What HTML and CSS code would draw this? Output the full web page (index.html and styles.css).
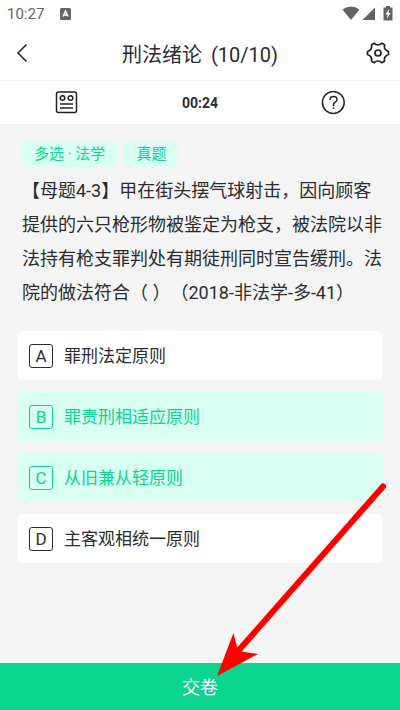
FILE: index.html
```html
<!DOCTYPE html>
<html lang="zh-CN">
<head>
<meta charset="utf-8">
<meta name="viewport" content="width=device-width, initial-scale=1">
<title>刑法绪论</title>
<link rel="stylesheet" href="styles.css">
</head>
<body>
<div class="page">
  <div class="status">
    <span class="clock">10:27</span>
    <svg class="badge" width="11" height="12" viewBox="0 0 11 12" aria-hidden="true"><rect width="11" height="12" rx="1.5" fill="#636363"/><path d="M3 8.5 5.500 3 8 8.500M4 7h3" fill="none" stroke="#fff" stroke-width="1.500"/></svg>
    <svg class="signals" width="51" height="16" viewBox="0 0 51 16" aria-hidden="true">
      <path d="M0.500 3.500Q9-2.500 17.500 3.500L9 14Z" fill="#636363"/>
      <path d="M20.500 14 33 1.500V14Z" fill="#636363"/>
      <path d="M44 0h4v1.500h2.500V14.500H41.500V1.500H44Z" fill="#636363"/>
      <path d="M47 3 43.500 8.500H45.500L45 12.500 48.500 7H46.500Z" fill="#fff"/>
    </svg>
  </div>
  <header class="header">
    <button class="icon-btn" type="button" aria-label="返回">
      <svg width="24" height="24" viewBox="0 0 24 24"><path d="M16.500 3.500 8 12 16.500 20.500" fill="none" stroke="#222" stroke-width="1.500"/></svg>
    </button>
    <h1 class="title">刑法绪论 <span class="count">(10/10)</span></h1>
    <button class="icon-btn" type="button" aria-label="设置">
      <svg width="24" height="24" viewBox="0 0 24 24" fill="none" stroke="#222" stroke-width="1.700" stroke-linejoin="round"><path d="M8.300 2.200Q9.700 4 12 4T15.700 2.200L18.500 3.800Q18 6.500 19 8T22.500 10.500V13.500Q20 14.300 19 16T18.500 20.200L15.700 21.800Q14.300 20 12 20T8.300 21.800L5.500 20.200Q6 17.500 5 16T1.500 13.500V10.500Q4 9.700 5 8T5.500 3.800Z"/><circle cx="12" cy="12" r="3"/></svg>
    </button>
  </header>
  <nav class="tools">
    <button class="icon-btn" type="button" aria-label="答题卡">
      <svg width="24" height="24" viewBox="0 0 24 24" fill="none" stroke="#222" stroke-width="1.500"><rect x="1.500" y="1" width="20" height="20.500" rx="2"/><circle cx="7.500" cy="7" r="2.300"/><circle cx="15.500" cy="7" r="2.300"/><path d="M5 13h13M5 17h13"/></svg>
    </button>
    <span class="timer">00:24</span>
    <button class="icon-btn" type="button" aria-label="帮助">
      <svg width="24" height="24" viewBox="0 0 24 24" fill="none" stroke="#222" stroke-width="1.500"><circle cx="12.300" cy="11.500" r="10.900"/><path d="M9 9C9 6.500 10.500 5.500 12.500 5.500S16 6.700 16 8.700C16 11 12.500 11.200 12.500 13.500V15M12.500 16.500v1.600"/></svg>
    </button>
  </nav>
  <main class="content">
    <div class="tags"><span class="tag">多选 · 法学</span><span class="tag">真题</span></div>
    <p class="question" id="question">【母题4-3】甲在街头摆气球射击，因向顾客提供的六只枪形物被鉴定为枪支，被法院以非法持有枪支罪判处有期徒刑同时宣告缓刑。法院的做法符合（ ）（2018-非法学-多-41）</p>
    <div class="options" role="group" aria-labelledby="question">
      <label class="option"><input class="check" type="checkbox"><span class="letter">A</span><span>罪刑法定原则</span></label>
      <label class="option"><input class="check" type="checkbox" checked><span class="letter">B</span><span>罪责刑相适应原则</span></label>
      <label class="option"><input class="check" type="checkbox" checked><span class="letter">C</span><span>从旧兼从轻原则</span></label>
      <label class="option"><input class="check" type="checkbox"><span class="letter">D</span><span>主客观相统一原则</span></label>
    </div>
  </main>
  <button class="submit" type="button">交卷</button>
  <svg class="arrow" width="170" height="194" viewBox="0 0 170 194" aria-hidden="true"><path d="M166 4.500 22 168" stroke="#f00" stroke-width="6" stroke-linecap="round"/><path d="M0 194 16.500 151 21 169 41 172Z" fill="#f00"/></svg>
</div>
</body>
</html>
```
FILE: styles.css
```css
* { box-sizing: border-box; }

body {
  margin: 0;
  background: #f4f4f4;
  color: #2c2c2c;
  font-family: Roboto, "Noto Sans CJK SC", sans-serif;
}

button {
  border: 0;
  padding: 0;
  font-family: inherit;
  cursor: pointer;
}

.page {
  position: relative;
  display: flex;
  flex-direction: column;
  min-height: 100vh;
}

.status {
  display: flex;
  align-items: center;
  height: 28px;
  padding: 0 7px;
  background: #fff;
}

.clock {
  font-size: 15px;
  color: #636363;
}

.badge { margin-left: 16px; }

.signals { margin-left: auto; }

.header {
  display: flex;
  align-items: center;
  justify-content: space-between;
  height: 53px;
  padding: 0 10px 2px;
  background: #fff;
  border-bottom: 1px solid #f4f4f4;
}

.icon-btn {
  display: flex;
  background: none;
}

.title {
  margin: 0;
  font-size: 20px;
  font-weight: 400;
}

.count { margin-left: 4px; }

.tools {
  display: grid;
  grid-template-columns: repeat(3, 1fr);
  align-items: center;
  justify-items: center;
  height: 44px;
  background: #fff;
  border-bottom: 1px solid #f0f0f0;
}

.timer {
  font-size: 14px;
  font-weight: 700;
}

.content {
  flex: 1;
  padding: 16px 17px;
}

.tags {
  display: flex;
  gap: 7px;
  padding: 0 5px;
}

.tag {
  padding: 0 12px;
  border-radius: 5px;
  background: #d8fff1;
  color: #09d58f;
  font-size: 15px;
  line-height: 26px;
}

.question {
  margin: 7px 0 21px;
  padding: 0 1px 0 5px;
  font-size: 18px;
  line-height: 34px;
  text-spacing-trim: space-all;
}

.options {
  display: flex;
  flex-direction: column;
  gap: 12px;
}

.option {
  display: flex;
  align-items: center;
  gap: 11px;
  height: 49px;
  padding: 0 12px;
  border-radius: 5px;
  background: #fff;
  font-size: 17px;
  line-height: 24px;
  cursor: pointer;
}

.option:has(:checked) {
  background: #d8fff1;
  color: #09d58f;
}

.check {
  appearance: none;
  position: absolute;
  margin: 0;
}

.letter {
  width: 24px;
  height: 24px;
  border: 1px solid currentColor;
  border-radius: 3px;
  line-height: 22px;
  text-align: center;
}

.submit {
  height: 47px;
  padding-bottom: 2px;
  background: #09d58f;
  color: #fff;
  font-size: 18px;
}

.arrow {
  position: absolute;
  left: calc(50% + 17px);
  bottom: 34px;
  pointer-events: none;
}
```
